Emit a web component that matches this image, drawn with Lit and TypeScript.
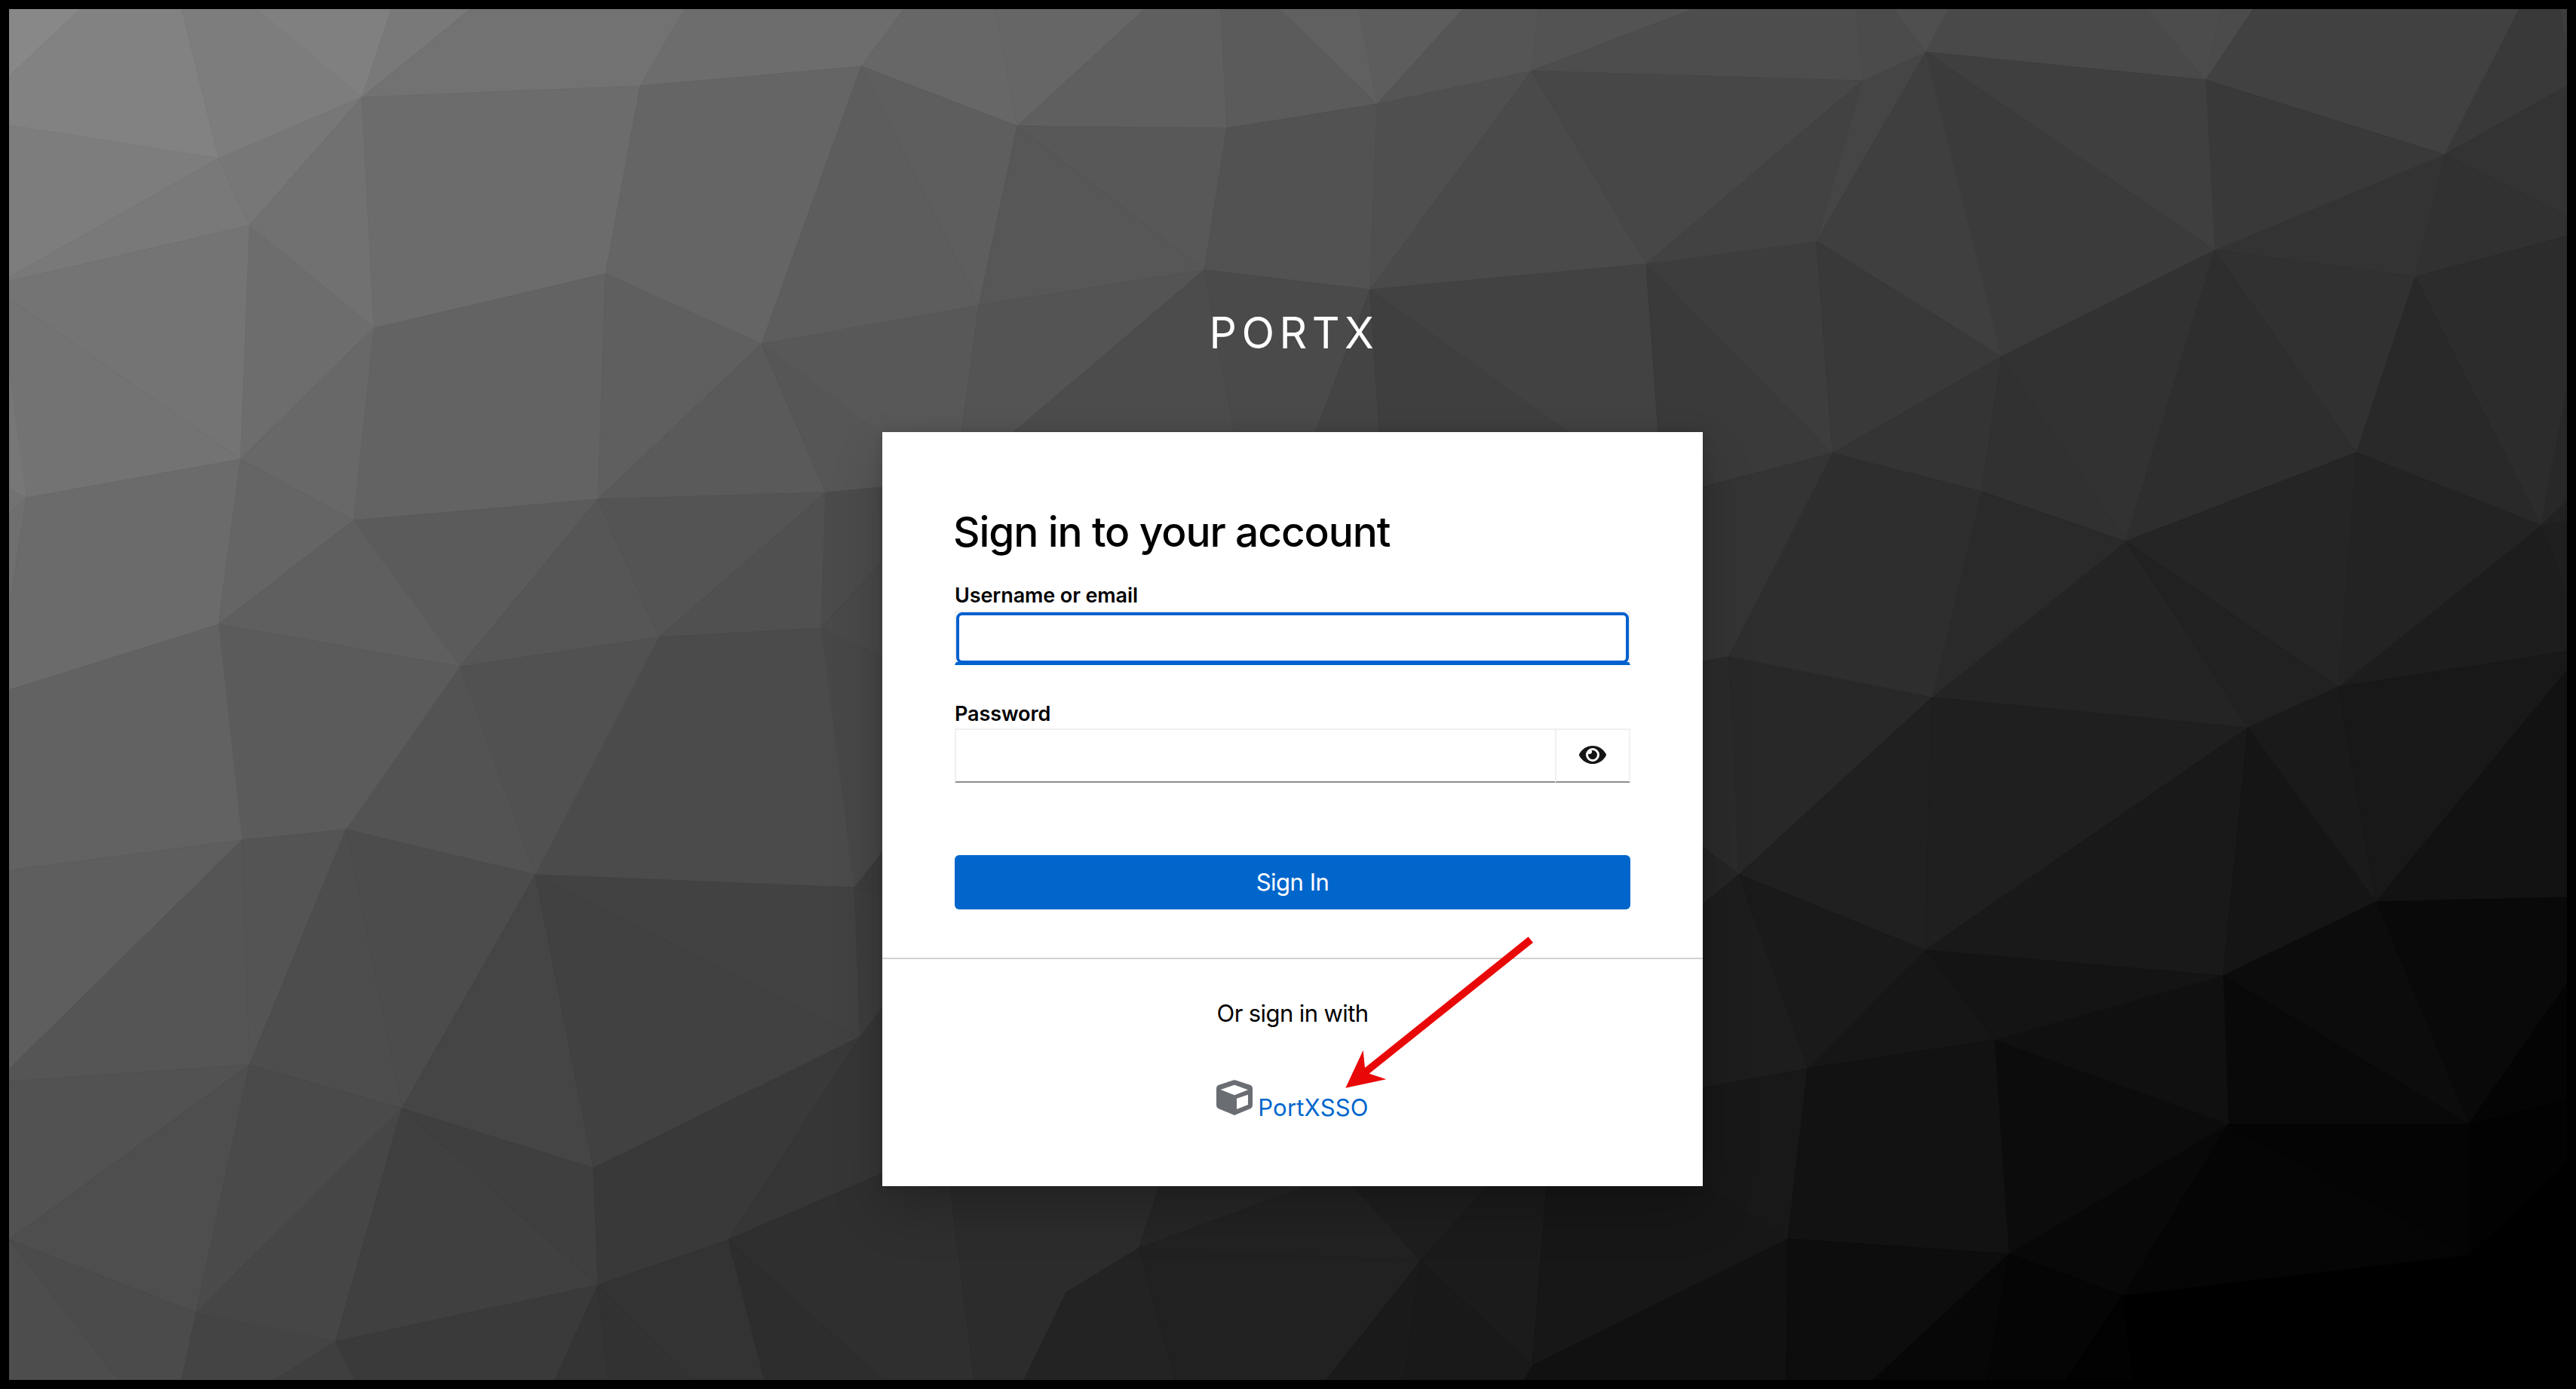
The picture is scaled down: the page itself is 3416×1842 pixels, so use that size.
import { LitElement, html, css, svg } from "lit";
import { customElement } from "lit/decorators.js";

type Point = [number, number];

/** Named vertices of the faceted backdrop, grouped by the edge they sit on. */
const top: number[] = [
  12, 107, 241, 340, 519, 624, 908, 1199, 1320, 1518, 1619, 1697, 1802, 1940, 2040, 2246,
  2462, 2511, 2584, 2847, 2946, 2988, 3341, 3395, 3404,
];
const left: number[] = [12, 101, 166, 368, 373, 396, 490, 648, 681, 810, 915, 1154, 1418, 1434, 1644];
const right: number[] = [65, 114, 286, 313, 516, 664, 691, 789, 864, 889, 1190, 1304, 1459, 1544];

const inner: Record<string, Point> = {
  A: [290, 210], B: [480, 129], C: [331, 299], D: [496, 435], E: [319, 609], F: [35, 660],
  G: [849, 114], H: [803, 363], I: [1010, 456], J: [1142, 88], K: [793, 662], M: [469, 690],
  N: [290, 828], O: [610, 884], P: [874, 845], Q: [1095, 653], R: [1089, 833], S: [1349, 167],
  U: [1627, 170], V: [1298, 405], W: [1826, 138], X: [2031, 94], Y: [1597, 358], Z: [1817, 384],
  AA: [2183, 350], AB: [2470, 107], AC: [2554, 69], AD: [2925, 106], AE: [2409, 320],
  AF: [3242, 205], AG: [2937, 332], AH: [2654, 473], AI: [3203, 367], AJ: [3125, 600],
  AK: [2430, 601], AL: [2628, 652], AM: [2819, 718], AN: [3370, 697], AO: [3101, 911],
  AP: [2292, 871], AQ: [2562, 925], AR: [2981, 965], AS: [3151, 1196], AT: [2306, 1160],
  AU: [2553, 1260], AV: [2948, 1294], AW: [2645, 1379], AX: [2397, 1417], AY: [2955, 1491],
  AZ: [3274, 1491], BA: [2371, 1643], BB: [2664, 1663], BC: [2815, 1718], BD: [3274, 1664],
  CA: [321, 1114], CB: [459, 1100], CC: [710, 1160], CD: [1133, 1177], CE: [1141, 1375],
  CF: [331, 1412], CG: [533, 1470], CH: [787, 1549], CI: [966, 1644], CJ: [793, 1704],
  CK: [260, 1741], CL: [445, 1779], DA: [1510, 1655], DB: [1414, 1714], DC: [1884, 1672],
  DD: [2032, 1811],
};

/**
 * Each facet is "<grey level in hex> <vertices>". Besides the inner vertices,
 * tN / lN / rN index the edge lists, bX lies on the bottom edge, and
 * pX / sX / wY / eY lie on the top, bottom, left and right side of the card.
 */
const facets = `
88 t0 t1 l1
82 l1 t1 t2 A l2
7d t2 t3 B A
80 t3 t4 B
79 t4 t5 B
72 t5 t6 G B
6d t6 t7 J G
7d l2 A l3
79 l3 A C l4
77 A B C
74 l4 C E l5
73 l5 E F l6
71 B C D
6d C D E
6c B G H D
65 G J I H
5d J V I
77 l6 F l7
72 l7 F l8
6f l8 F l9
6b F E N l10 l9
68 E D M
65 E M N
63 D H K M
5f H I K
5a K I Q
56 I Q w646 w569
58 I V p1275 p1170
5b M K O
5f M N O
56 K O P
54 K P Q
50 P Q R
4b Q R w744 w646
49 R w744 w872
47 R w872 w1129 CD
4b P R CD CC
51 O P CC
53 O CC CB
5b N O CB CA
62 l10 N CA l11
5e l11 CA l12
55 l12 CA CF l13
54 CA CB CF
4d CB CG CF
4c CB CC CG
45 CC CG CH
41 CC CH CE
42 CC CE CD
3d CD CE w1335 w1189
3c CD w1129 w1189
52 l13 CF l14
4e l14 CF CK
4a CF CG CK
46 CK CG CL
40 CG CL CJ
3f CG CH CJ
39 CH CE CI CJ
36 CE CI w1556 w1335
4b l14 CK b241 b157
4d l14 b157 b12
44 CK CL b364 b241
3f CL b364 b471
3a CL CJ b736 b471
34 CJ b736 b806
32 CJ b806 b918
33 CJ CI b1014 b918
2d CI b1014 b1171
2f CI w1556 s1170 s1260 b1292 b1171
2c s1260 s1538 DA DB b1358 b1292
26 s1538 DA s1737
23 DA DB b1358 b1559
21 DA DC b1759 b1559
22 DA s1737 s1793 DC
1e s1793 s1973 DC
1b DC s1973 s2051 DD
1a DC b1759 b1863
19 DC b1863 b2021 DD
17 s2051 DD BA s2258
11 DD BA b2369 b2021
67 t7 t8 S J
66 t8 t9 S
5f t9 t10 U S
5b t10 t11 W U
60 t11 t12 W
5d t12 t13 W
55 t13 t14 X W
53 t14 t15 X
4d t15 t16 AB X
5e J S V
57 S Y V
58 S U Y
52 U W Z Y
4f W X Z
4a X Z AA
47 X AB AA
54 V Y p1343 p1275
4c Y p1343 p1637
4a Y p1637 p1744 Z
44 Z p1744 p1829
3f Z p1829 p2081
42 Z p2081 p2199 AA
3a AA p2199 p2258 e646 AK
3d AA AE AK
42 AB AE AA
45 AB AC AE
4b t16 t17 AC AB
4f t17 t18 AC
49 t18 t19 AD AC
4c t19 t20 AD
4b t20 t21 AD
41 t21 t22 AF AD
39 t22 t23 r0 r1 AF
3d t23 t24 r0
33 AF r1 r2
31 AF r2 r3 AI
33 AG AF AI
39 AD AF AG
3f AC AD AG
3b AC AG AH
3f AC AH AE
39 AE AH AK
34 AK AH AL
31 AH AL AM
32 AH AG AM
2e AG AM AJ
31 AG AI AJ
29 AI AJ AN
2c AI r3 r4 AN
28 AN r4 r5
22 AN r5 r6
1f AN r6 r7
1d AN r7 r8 AO
23 AJ AN AO
25 AJ AM AO
21 AM AO AR
24 AM AR AQ
2a AL AM AQ
2e AK AL AQ AP
34 AK AP e877 e646
28 AP AQ AT
2b AP e877 e1122 AT
25 AT e1122 e1200
20 AQ AT AU
1f AQ AU AR
19 AU AR AV
15 AR AV AS
1a AR AO AS
18 AO r8 r9 AS
12 r9 r10 AS
09 AS r10 r11 AZ
0c AS AV AZ
09 AV AY AZ
04 AZ r11 r12
02 AZ r12 r13 BD
04 AY AZ BD
05 AY BD BC
08 AY BC BB
0c AW AY BB
10 AW AV AY
14 AU AV AW
16 AU AW AX
1a AT AU AX
1d AT e1200 e1443 AX
18 AX e1443 s2258 BA
12 AX AW BB BA
0d BA BB b2484 b2369
07 BB b2484 b2635
05 BB b2635 b2739 BC
02 BC b2739 b2828
`
  .trim()
  .split("\n")
  .map((line) => {
    const [grey, ...names] = line.split(" ");
    return { fill: `#${grey}${grey}${grey}`, points: names.map(locate).join(" ") };
  });

function locate(name: string): string {
  if (inner[name]) return inner[name].join(",");
  const n = Number(name.slice(1));
  switch (name[0]) {
    case "t": return `${top[n]},12`;
    case "l": return `12,${left[n]}`;
    case "r": return `3404,${right[n]}`;
    case "b": return `${n},1830`;
    case "p": return `${n},574`;
    case "s": return `${n},1572`;
    case "w": return `1171,${n}`;
    default: return `2257,${n}`;
  }
}

@customElement("low-poly-backdrop")
export class LowPolyBackdrop extends LitElement {
  static styles = css`
    :host { display: block; }
    .art { display: block; width: 100%; height: 100%; }
  `;

  render() {
    return html`<svg class="art" viewBox="0 0 3416 1842" aria-hidden="true">
      ${facets.map((f) => svg`<polygon points=${f.points} fill=${f.fill} stroke=${f.fill} stroke-width="0.8"></polygon>`)}
      <path d="M0 0H3416V1842H0ZM12 12V1830H3404V12Z" fill="#000" fill-rule="evenodd"></path>
    </svg>`;
  }
}

@customElement("login-card")
export class LoginCard extends LitElement {
  static styles = css`
    :host {
      display: block;
      box-sizing: border-box;
      width: 1088px;
      height: 1000px;
      background: #fff;
      color: #000;
      box-shadow: 0 32px 64px rgba(3, 3, 3, 0.2), 0 0 16px rgba(3, 3, 3, 0.12);
    }
    .form {
      display: flex;
      flex-direction: column;
      box-sizing: border-box;
      height: 699px;
      padding: 96px 96px 0;
      border-bottom: 2px solid #d2d2d2;
    }
    .title {
      margin: 0 0 0 -2px;
      font-size: 55px;
      line-height: 72px;
      font-weight: 500;
      letter-spacing: -1.1px;
      white-space: nowrap;
    }
    .field { display: flex; flex-direction: column; }
    .user { margin-top: 29px; }
    .pass { margin-top: 45px; }
    .label {
      font-size: 27px;
      line-height: 40px;
      font-weight: 600;
      letter-spacing: -0.1px;
      white-space: nowrap;
    }
    .user .label { line-height: 40px; }
    .pass .label { height: 39px; }
    .input {
      box-sizing: border-box;
      width: 100%;
      height: 72px;
      margin: 0;
      padding: 0 16px;
      border: 2px solid #f0f0f0;
      border-bottom-color: #8a8d90;
      border-radius: 0;
      background: #fff;
      font: inherit;
      outline: none;
    }
    .focused { display: flex; padding: 0; border-bottom: 4px solid #06c; }
    .ring {
      flex: 1;
      margin-bottom: -2px;
      border: 4px solid #0060d0;
      border-radius: 8px;
    }
    .group { display: flex; }
    .reveal {
      display: grid;
      place-items: center;
      flex: none;
      box-sizing: border-box;
      width: 100px;
      height: 72px;
      margin-left: -2px;
      padding: 0 0 2px;
      border: 2px solid #f0f0f0;
      border-bottom-color: #8a8d90;
      background: #fff;
    }
    .eye { display: block; width: 36px; height: 32px; }
    .submit {
      height: 72px;
      margin-top: 96px;
      padding: 0;
      border: 0;
      border-radius: 6px;
      background: #06c;
      color: #fff;
      font-family: inherit;
      font-size: 31px;
      line-height: 72px;
      letter-spacing: -0.5px;
    }
    .social {
      display: flex;
      flex-direction: column;
      align-items: center;
    }
    .or {
      margin: 48px 0 0;
      font-size: 31px;
      line-height: 48px;
      letter-spacing: -0.6px;
      white-space: nowrap;
    }
    .provider {
      display: flex;
      gap: 7px;
      margin-top: 64px;
      color: #06c;
      text-decoration: none;
    }
    .cube { display: block; width: 48px; height: 47px; }
    .name {
      margin-top: 13px;
      font-size: 31px;
      line-height: 48px;
      letter-spacing: 0.2px;
      white-space: nowrap;
    }
  `;

  render() {
    return html`
      <div class="form">
        <h1 class="title">Sign in to your account</h1>
        <div class="field user">
          <span class="label">Username or email</span>
          <div class="input focused"><div class="ring"></div></div>
        </div>
        <div class="field pass">
          <label class="label" for="password">Password</label>
          <div class="group">
            <input class="input" id="password" type="password" />
            <button class="reveal" type="button">
              <svg class="eye" viewBox="0 0 576 512" fill="#151515">
                <path d="M572.52 241.4C518.29 135.59 410.93 64 288 64S57.68 135.64 3.48 241.41a32.35 32.35 0 0 0 0 29.19C57.71 376.41 165.07 448 288 448s230.32-71.64 284.52-177.41a32.35 32.35 0 0 0 0-29.19zM288 400a144 144 0 1 1 144-144 143.93 143.93 0 0 1-144 144zm0-240a95.31 95.31 0 0 0-25.31 3.79 47.85 47.85 0 0 1-66.9 66.9A95.78 95.78 0 1 0 288 160z"></path>
              </svg>
            </button>
          </div>
        </div>
        <button class="submit" type="button">Sign In</button>
      </div>
      <div class="social">
        <p class="or">Or sign in with</p>
        <a class="provider">
          <svg class="cube" viewBox="0 0 144 141" fill="#6a6e73">
            <path fill-rule="evenodd" d="M67 1.500Q72-.5 77 1.500L136 21Q144 25 144 33V102Q144 110 137 114L77 139Q72 142 67 139L7 114Q0 110 0 102V33Q0 25 8 21ZM17 39L72 61L126 40L72 20ZM81 74V117L126 99V59Z"></path>
          </svg>
          <span class="name">PortXSSO</span>
        </a>
      </div>
    `;
  }
}

@customElement("app-root")
export class AppRoot extends LitElement {
  static styles = css`
    :host {
      display: block;
      position: relative;
      box-sizing: border-box;
      width: 3416px;
      height: 1842px;
      overflow: hidden;
      background: #000;
      font-family: Inter, "Liberation Sans", sans-serif;
    }
    .backdrop { position: absolute; inset: 0; }
    .page {
      position: relative;
      display: flex;
      flex-direction: column;
      align-items: center;
      margin-left: 12px;
    }
    .brand {
      margin: 402px 0 0;
      height: 171px;
      padding-left: 4px;
      color: #fff;
      font-size: 57px;
      line-height: 80px;
      font-weight: 400;
      letter-spacing: 6.5px;
    }
    .pointer {
      position: absolute;
      left: 1780px;
      top: 1240px;
      width: 256px;
      height: 206px;
    }
  `;

  render() {
    return html`
      <low-poly-backdrop class="backdrop"></low-poly-backdrop>
      <main class="page">
        <div class="brand">PORTX</div>
        <login-card></login-card>
      </main>
      <svg class="pointer" viewBox="600 60 768 618" fill="#e90808" aria-hidden="true">
        <path d="M1340 67L1359 90L707 611L775 634L613 668L683 518L690 588Z"></path>
      </svg>
    `;
  }
}
